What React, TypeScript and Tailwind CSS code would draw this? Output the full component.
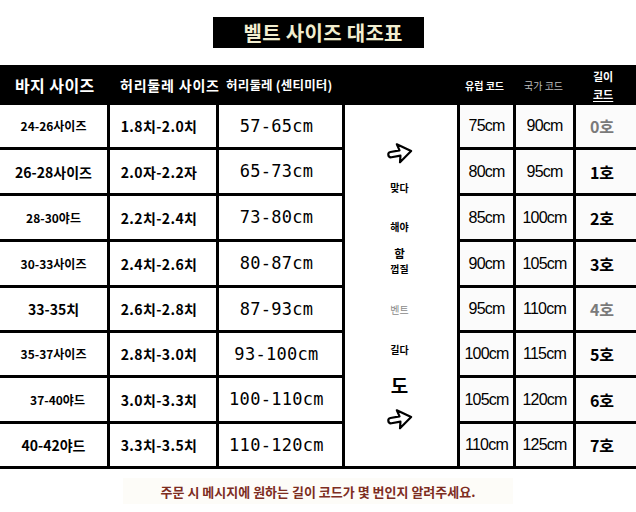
import React from 'react';

type Row = {
  size: string;
  sizeCls: string;
  waist: string;
  cm: string;
  eu: string;
  kr: string;
  code: string;
  codeCls: string;
  h: string;
};

const rows: Row[] = [
  { size: '24-26사이즈', sizeCls: 'text-[12px]', waist: '1.8치-2.0치', cm: '57-65cm', eu: '75cm', kr: '90cm', code: '0호', codeCls: 'text-[#7a7a7a]', h: 'h-[45px]' },
  { size: '26-28사이즈', sizeCls: 'text-[14px]', waist: '2.0자-2.2자', cm: '65-73cm', eu: '80cm', kr: '95cm', code: '1호', codeCls: 'text-black', h: 'h-[46px]' },
  { size: '28-30야드', sizeCls: 'text-[12px]', waist: '2.2치-2.4치', cm: '73-80cm', eu: '85cm', kr: '100cm', code: '2호', codeCls: 'text-black', h: 'h-[46px]' },
  { size: '30-33사이즈', sizeCls: 'text-[12px]', waist: '2.4치-2.6치', cm: '80-87cm', eu: '90cm', kr: '105cm', code: '3호', codeCls: 'text-black', h: 'h-[46px]' },
  { size: '33-35치', sizeCls: 'text-[14px]', waist: '2.6치-2.8치', cm: '87-93cm', eu: '95cm', kr: '110cm', code: '4호', codeCls: 'text-[#7a7a7a]', h: 'h-[45px]' },
  { size: '35-37사이즈', sizeCls: 'text-[12px]', waist: '2.8치-3.0치', cm: '93-100cm', eu: '100cm', kr: '115cm', code: '5호', codeCls: 'text-black', h: 'h-[45px]' },
  { size: '37-40야드', sizeCls: 'text-[12px] pl-[8px]', waist: '3.0치-3.3치', cm: '100-110cm', eu: '105cm', kr: '120cm', code: '6호', codeCls: 'text-black', h: 'h-[46px]' },
  { size: '40-42야드', sizeCls: 'text-[14px]', waist: '3.3치-3.5치', cm: '110-120cm', eu: '110cm', kr: '125cm', code: '7호', codeCls: 'text-black', h: 'h-[45px]' },
];

const Arrow = () => (
  <svg width="28" height="26" viewBox="0 0 26 24" className="-rotate-[10deg]">
    <path
      d="M4.5 9.5 H13 L11.5 3.5 L23.5 12 L11.5 20.5 L13 14.5 H4.5 A2.5 2.5 0 0 1 4.5 9.5 Z"
      fill="white"
      stroke="black"
      strokeWidth="2"
      strokeLinejoin="round"
    />
  </svg>
);

export default function App() {
  return (
    <div className="h-[512px] w-[636px] overflow-hidden bg-white font-['Noto_Sans_CJK_KR',sans-serif] text-black">
      {/* title */}
      <div className="mt-[17px] flex justify-center">
        <div className="flex h-[31px] w-[211px] items-center bg-black pl-[31px] pr-[5px]">
          <span className="whitespace-nowrap text-[20px] font-bold leading-none tracking-[0.3px] text-[#f2eed0]">
            벨트 사이즈 대조표
          </span>
        </div>
      </div>

      {/* header */}
      <div className="mt-[17px] flex h-[40px] items-center whitespace-nowrap bg-black text-white">
        <div className="w-[120px] shrink-0 pl-[15px] text-[16px] font-bold leading-none tracking-[0.4px]">바지 사이즈</div>
        <div className="w-[106px] shrink-0 text-[14px] font-bold leading-none tracking-[0.8px]">허리둘레 사이즈</div>
        <div className="w-[239px] shrink-0 text-[12.5px] font-bold leading-none tracking-[0.2px]">허리둘레 (센티미터)</div>
        <div className="mt-[2px] w-[59px] shrink-0 text-[10px] font-bold leading-none">유럽 코드</div>
        <div className="mt-[2px] w-[69px] shrink-0 text-[10px] leading-none text-[#bdbdbd]">국가 코드</div>
        <div className="flex flex-col items-center text-[11px] font-bold leading-[18px]">
          <span>길이</span>
          <span className="underline underline-offset-2">코드</span>
        </div>
      </div>

      {/* body */}
      <div className="flex">
        <div className="flex w-[345px] flex-col">
          {rows.map((r) => (
            <div key={r.size} className={`flex border-b-[3px] border-black ${r.h}`}>
              <div className="flex w-[110px] shrink-0 items-center justify-center border-r-[3px] border-black">
                <span className={`whitespace-nowrap font-bold leading-none ${r.sizeCls}`}>{r.size}</span>
              </div>
              <div className="flex w-[109px] shrink-0 items-center justify-center border-r-[3px] border-black pr-[8px]">
                <span className="whitespace-nowrap text-[14px] font-bold leading-none tracking-[0.4px]">{r.waist}</span>
              </div>
              <div className="flex w-[126px] shrink-0 items-center justify-center border-r-[3px] border-black pr-[8px]">
                <span className="whitespace-nowrap font-['DejaVu_Sans_Mono',monospace] text-[17px] leading-none tracking-[0.3px]">{r.cm}</span>
              </div>
            </div>
          ))}
        </div>

        <div className="flex w-[112px] shrink-0 flex-col items-center border-b-[3px] border-black pr-[3px] leading-[13px]">
          <div className="mt-[35px] h-[26px]">
            <Arrow />
          </div>
          <span className="mt-[15px] text-[10px] font-bold">맞다</span>
          <span className="mt-[26px] text-[10px] font-bold">해야</span>
          <span className="mt-[12px] text-[11.5px] font-bold leading-[16px]">함</span>
          <span className="text-[10px] font-bold leading-[15px]">껍질</span>
          <span className="mt-[27px] text-[10px] text-[#8a8a8a]">벤트</span>
          <span className="mt-[27px] text-[10px] font-bold">길다</span>
          <span className="mt-[18px] text-[19px] font-bold leading-[22px]">도</span>
          <div className="mt-[10px] h-[26px]">
            <Arrow />
          </div>
        </div>

        <div className="flex flex-1 flex-col">
          {rows.map((r) => (
            <div key={r.eu + r.code} className={`flex border-b-[3px] border-black ${r.h}`}>
              <div className="flex w-[59px] shrink-0 items-center justify-center border-x-[3px] border-black bg-[#fbfbfb]">
                <span className="whitespace-nowrap font-['Liberation_Sans',sans-serif] text-[16px] leading-none tracking-[-0.8px]">{r.eu}</span>
              </div>
              <div className="flex w-[60px] shrink-0 items-center justify-center border-r-[3px] border-black bg-[#fbfbfb]">
                <span className="whitespace-nowrap font-['Liberation_Sans',sans-serif] text-[16px] leading-none tracking-[-0.8px]">{r.kr}</span>
              </div>
              <div className="flex flex-1 items-center justify-center bg-[#fbfbfb] pr-[8px]">
                <span className={`whitespace-nowrap text-[16px] font-bold leading-none ${r.codeCls}`}>{r.code}</span>
              </div>
            </div>
          ))}
        </div>
      </div>

      {/* footer note */}
      <div className="mt-[9px] flex justify-center">
        <div className="flex h-[26px] w-[390px] items-center justify-center bg-[#fdfcf8]">
          <span className="whitespace-nowrap text-[13px] font-bold leading-none text-[#7d2d1f]">
            주문 시 메시지에 원하는 길이 코드가 몇 번인지 알려주세요.
          </span>
        </div>
      </div>
    </div>
  );
}
